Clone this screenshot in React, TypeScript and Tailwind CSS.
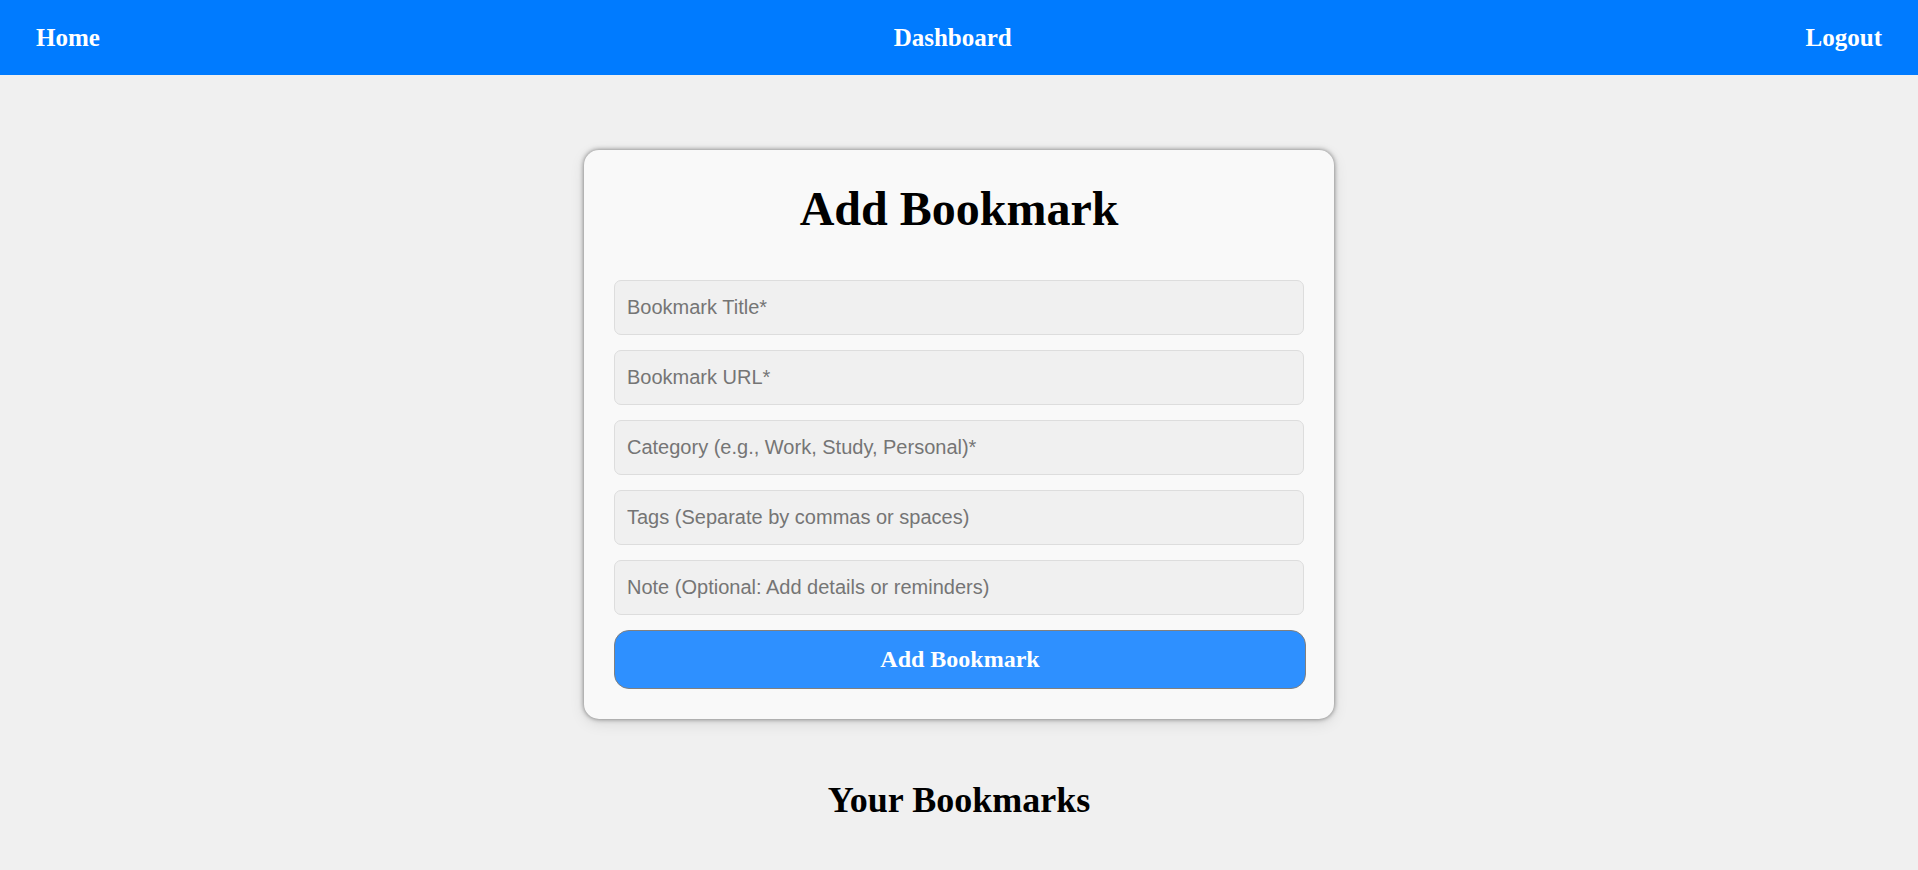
import React from "react";

const fields = [
  { id: "title", label: "Bookmark Title*", type: "text" },
  { id: "url", label: "Bookmark URL*", type: "url" },
  { id: "category", label: "Category (e.g., Work, Study, Personal)*", type: "text" },
  { id: "tags", label: "Tags (Separate by commas or spaces)", type: "text" },
  { id: "note", label: "Note (Optional: Add details or reminders)", type: "text" },
];

export default function App() {
  return (
    <div className="min-h-screen bg-[#f0f0f0] font-['Liberation_Serif',serif] text-black">
      <nav className="flex items-center justify-between bg-[#007bff] px-9 py-6 text-[25px] leading-[27px] font-bold text-white">
        <a href="#home">Home</a>
        <a href="#dashboard">Dashboard</a>
        <a href="#logout">Logout</a>
      </nav>
      <main className="flex flex-col items-center px-4 pt-[75px]">
        <form
          className="w-full max-w-[750px] rounded-[15px] bg-[#f9f9f9] p-[30px] shadow-[0_0_5px_rgba(0,0,0,0.5),0_4px_15px_rgba(0,0,0,0.1)]"
          onSubmit={(e) => e.preventDefault()}
        >
          <h1 className="mb-[43px] text-center text-5xl leading-[57px] font-bold">Add Bookmark</h1>
          <div className="flex flex-col gap-[15px]">
            {fields.map((f) => (
              <input
                key={f.id}
                id={f.id}
                type={f.type}
                aria-label={f.label}
                placeholder={f.label}
                className="h-[55px] w-full rounded-[7px] border border-[#dddddd] bg-[#f0f0f0] px-3 font-['Liberation_Sans',sans-serif] text-xl placeholder:text-[#757575]"
              />
            ))}
            <button
              type="submit"
              className="w-[calc(100%+2px)] rounded-[15px] border border-[#808080] bg-[#2e90ff] py-[15px] text-2xl leading-[27px] font-bold text-white"
            >
              Add Bookmark
            </button>
          </div>
        </form>
        <h2 className="mt-[60px] text-4xl leading-[42px] font-bold">Your Bookmarks</h2>
      </main>
    </div>
  );
}
